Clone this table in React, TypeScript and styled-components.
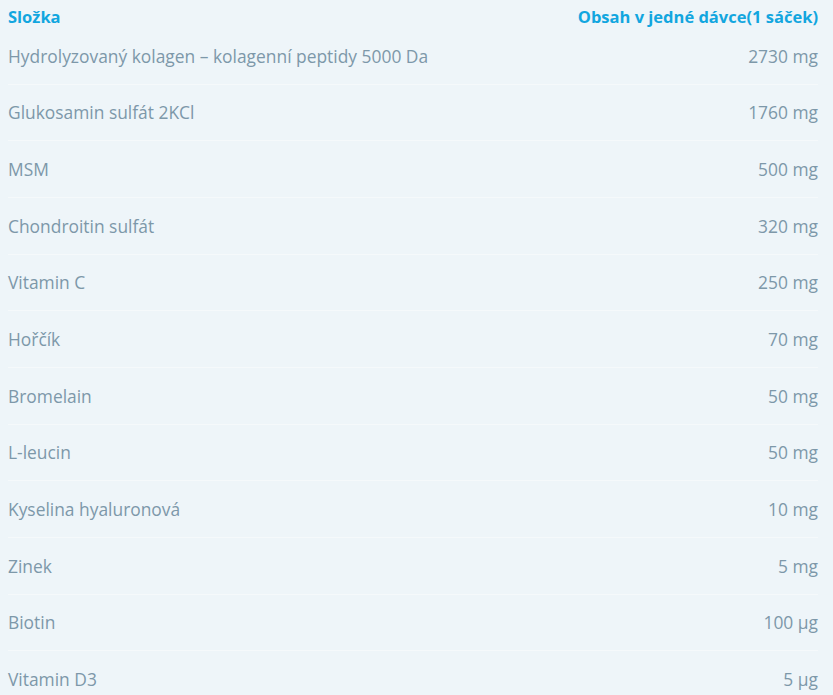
import React from "react";
import styled, { createGlobalStyle } from "styled-components";

const Global = createGlobalStyle`
  html, body { margin: 0; padding: 0; }
  body {
    background: #eef5f9;
    font-family: "Open Sans", "Liberation Sans", sans-serif;
  }
`;

const Table = styled.div`
  display: flex;
  flex-direction: column;
  padding: 0 15px 0 8px;
  background: #eef5f9;
  min-height: 695px;
  box-sizing: border-box;
`;

const HeadRow = styled.div`
  display: flex;
  justify-content: space-between;
  align-items: center;
  height: 28px;
  padding-top: 4px;
  box-sizing: border-box;
`;

const HeadCell = styled.div`
  font-size: 16.5px;
  font-weight: 700;
  color: #12a6df;
`;

const Row = styled.div<{ $last?: boolean }>`
  display: flex;
  justify-content: space-between;
  align-items: center;
  height: 56.67px;
  box-sizing: border-box;
  border-bottom: 1px solid ${(p) => (p.$last ? "transparent" : "#f5f9fb")};
`;

const Cell = styled.div`
  font-size: 17.4px;
  color: #7d98a9;
`;

const rows: [string, string][] = [
  ["Hydrolyzovaný kolagen – kolagenní peptidy 5000 Da", "2730 mg"],
  ["Glukosamin sulfát 2KCl", "1760 mg"],
  ["MSM", "500 mg"],
  ["Chondroitin sulfát", "320 mg"],
  ["Vitamin C", "250 mg"],
  ["Hořčík", "70 mg"],
  ["Bromelain", "50 mg"],
  ["L-leucin", "50 mg"],
  ["Kyselina hyaluronová", "10 mg"],
  ["Zinek", "5 mg"],
  ["Biotin", "100 µg"],
  ["Vitamin D3", "5 µg"],
];

export default function App() {
  return (
    <>
      <Global />
      <Table>
        <HeadRow>
          <HeadCell>Složka</HeadCell>
          <HeadCell>Obsah v jedné dávce(1 sáček)</HeadCell>
        </HeadRow>
        {rows.map(([n, v], i) => (
          <Row key={n} $last={i === rows.length - 1}>
            <Cell>{n}</Cell>
            <Cell>{v}</Cell>
          </Row>
        ))}
      </Table>
    </>
  );
}
